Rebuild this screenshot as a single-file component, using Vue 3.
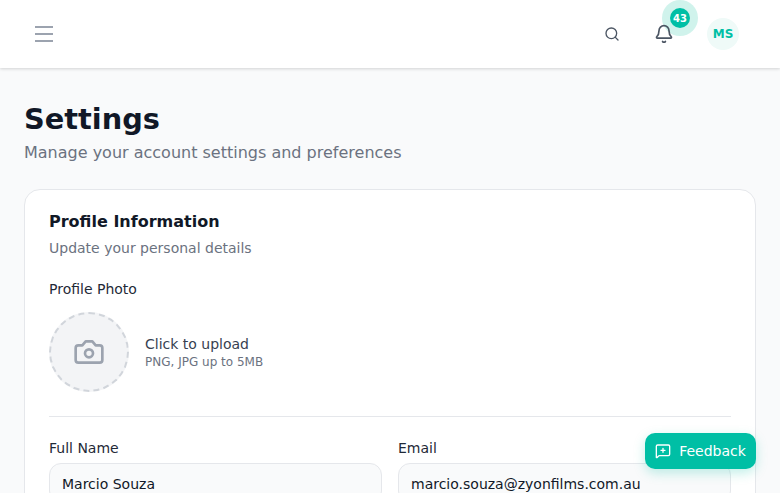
<script setup>
const fields = [
  { label: 'Full Name', value: 'Marcio Souza' },
  { label: 'Email', value: 'marcio.souza@zyonfilms.com.au' },
]
</script>

<template>
  <div class="page">
    <header class="topbar">
      <button class="menu" aria-label="Menu">
        <svg width="24" height="24" viewBox="0 0 24 24" fill="none" stroke="#9ca3af" stroke-width="2">
          <path d="M3 5h18M3 12h18M3 19h18" />
        </svg>
      </button>
      <div class="actions">
        <svg class="search" width="16" height="16" viewBox="0 0 24 24" fill="none" stroke="#4b5563" stroke-width="2" stroke-linecap="round" stroke-linejoin="round">
          <circle cx="11" cy="11" r="8" />
          <path d="m21 21-4.3-4.3" />
        </svg>
        <div class="bell">
          <span class="halo"><span class="badge">43</span></span>
          <svg class="bell-icon" width="20" height="20" viewBox="0 0 24 24" fill="none" stroke="#4b5563" stroke-width="2" stroke-linecap="round" stroke-linejoin="round">
            <path d="M10.3 21a2 2 0 0 0 3.4 0" />
            <path d="M3.3 15.3A1 1 0 0 0 4 17h16a1 1 0 0 0 .7-1.7C19.4 14 18 12.500 18 8A6 6 0 0 0 6 8c0 4.500-1.400 6-2.700 7.300" />
          </svg>
        </div>
        <div class="avatar">MS</div>
      </div>
    </header>

    <main class="content">
      <h1>Settings</h1>
      <p class="lead">Manage your account settings and preferences</p>

      <section class="card">
        <h2>Profile Information</h2>
        <p class="sub">Update your personal details</p>
        <div class="label photo-label">Profile Photo</div>
        <div class="photo-row">
          <div class="photo">
            <svg width="32" height="32" viewBox="0 0 24 24" fill="none" stroke="#9ca3af" stroke-width="2" stroke-linecap="round" stroke-linejoin="round">
              <path d="M14.500 4h-5L7 7H4a2 2 0 0 0-2 2v9a2 2 0 0 0 2 2h16a2 2 0 0 0 2-2V9a2 2 0 0 0-2-2h-3z" />
              <circle cx="12" cy="13" r="3" />
            </svg>
          </div>
          <div>
            <div class="upload">Click to upload</div>
            <div class="hint">PNG, JPG up to 5MB</div>
          </div>
        </div>
        <div class="divider"></div>
        <div class="grid">
          <div v-for="f in fields" :key="f.label">
            <div class="label">{{ f.label }}</div>
            <div class="input">{{ f.value }}</div>
          </div>
        </div>
      </section>
    </main>

    <button class="feedback">
      <svg width="16" height="16" viewBox="0 0 24 24" fill="none" stroke="#fff" stroke-width="2" stroke-linecap="round" stroke-linejoin="round">
        <path d="M22 17a2 2 0 0 1-2 2H6.800a2 2 0 0 0-1.400.600l-2.200 2.200A.7.7 0 0 1 2 21.300V5a2 2 0 0 1 2-2h16a2 2 0 0 1 2 2z" />
        <path d="M12 8v6M9 11h6" />
      </svg>
      Feedback
    </button>
  </div>
</template>

<style>
html, body { margin: 0; height: 100%; overflow: hidden; }
</style>

<style scoped>
.page {
  position: relative;
  height: 493px;
  overflow: hidden;
  background: #f9fafb;
  font-family: "DejaVu Sans", sans-serif;
  color: #111827;
}
.topbar {
  height: 68px;
  box-sizing: border-box;
  background: #fff;
  display: flex;
  align-items: center;
  justify-content: space-between;
  padding: 0 41px 0 32px;
  box-shadow: 0 1px 3px rgba(0, 0, 0, 0.16);
}
.menu {
  border: 0;
  background: none;
  padding: 0;
  display: flex;
}
.actions {
  display: flex;
  align-items: center;
}
.search { margin-right: 34px; }
.bell {
  position: relative;
  display: flex;
  margin-right: 33px;
}
.bell-icon { position: relative; }
.halo {
  position: absolute;
  left: 8px;
  top: -24px;
  width: 36px;
  height: 36px;
  border-radius: 50%;
  background: #d0f3ec;
  display: flex;
  align-items: center;
  justify-content: center;
}
.badge {
  position: relative;
  z-index: 1;
  width: 20px;
  height: 20px;
  border-radius: 50%;
  background: #00bfa5;
  color: #fff;
  font-size: 10px;
  font-weight: 700;
  display: flex;
  align-items: center;
  justify-content: center;
}
.avatar {
  width: 32px;
  height: 32px;
  border-radius: 50%;
  background: #effaf8;
  color: #00bfa5;
  font-size: 12px;
  font-weight: 700;
  display: flex;
  align-items: center;
  justify-content: center;
}
.content { padding: 33px 24px 0; }
h1 {
  margin: 0;
  font-size: 28.8px;
  line-height: 36px;
  font-weight: 700;
  color: #111827;
}
.lead {
  margin: 4px 0 0;
  font-size: 16px;
  line-height: 24px;
  color: #6b7280;
}
.card {
  margin-top: 24px;
  background: #fff;
  border: 1px solid #e5e7eb;
  border-radius: 16px;
  padding: 20px 24px;
}
h2 {
  margin: 0;
  font-size: 16px;
  line-height: 24px;
  font-weight: 700;
  color: #111827;
}
.sub {
  margin: 4px 0 0;
  font-size: 14px;
  line-height: 20px;
  color: #6b7280;
}
.label {
  font-size: 14px;
  line-height: 20px;
  color: #1f2937;
  margin-bottom: 5px;
}
.photo-label { margin-top: 21px; margin-bottom: 13px; }
.photo-row {
  display: flex;
  align-items: center;
  gap: 16px;
}
.photo {
  width: 80px;
  height: 80px;
  box-sizing: border-box;
  border: 2px dashed #d1d5db;
  border-radius: 50%;
  background: #f3f4f6;
  display: flex;
  align-items: center;
  justify-content: center;
}
.upload {
  font-size: 14px;
  line-height: 20px;
  color: #374151;
}
.hint {
  font-size: 12px;
  line-height: 16px;
  color: #6b7280;
}
.divider {
  height: 1px;
  background: #e5e7eb;
  margin: 24px 0 21px;
}
.grid {
  display: grid;
  grid-template-columns: 1fr 1fr;
  gap: 16px;
}
.input {
  height: 40px;
  box-sizing: border-box;
  padding: 10px 12px;
  background: #f9fafb;
  border: 1px solid #e5e7eb;
  border-radius: 12px;
  font-size: 14px;
  line-height: 20px;
  color: #111827;
}
.feedback {
  position: absolute;
  left: 645px;
  top: 433px;
  width: 111px;
  height: 36px;
  padding: 0;
  border: 0;
  border-radius: 10px;
  background: #00bfa5;
  color: #fff;
  font-family: inherit;
  font-size: 14px;
  display: flex;
  align-items: center;
  justify-content: center;
  gap: 8px;
  box-shadow: 0 4px 12px rgba(0, 191, 165, 0.25);
}
</style>
